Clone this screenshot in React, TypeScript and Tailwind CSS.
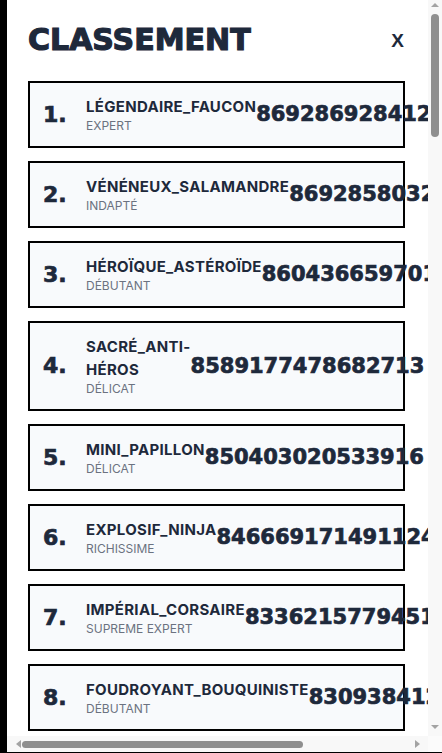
import React from 'react'

type Player = {
  name: string
  title: string
  score: string
}

const topPlayers: Player[] = [
  { name: 'LÉGENDAIRE_FAUCON', title: 'EXPERT', score: '869286928412357' },
  { name: 'VÉNÉNEUX_SALAMANDRE', title: 'INDAPTÉ', score: '869285803214675' },
  { name: 'HÉROÏQUE_ASTÉROÏDE', title: 'DÉBUTANT', score: '860436659701248' },
  { name: 'SACRÉ_ANTI-HÉROS', title: 'DÉLICAT', score: '8589177478682713' },
  { name: 'MINI_PAPILLON', title: 'DÉLICAT', score: '850403020533916' },
  { name: 'EXPLOSIF_NINJA', title: 'RICHISSIME', score: '846669171491124' },
  { name: 'IMPÉRIAL_CORSAIRE', title: 'SUPREME EXPERT', score: '833621577945102' },
  { name: 'FOUDROYANT_BOUQUINISTE', title: 'DÉBUTANT', score: '830938412650' },
]

const adjectives = ['RAPIDE', 'FÉROCE', 'DISCRET', 'GÉANT', 'MYSTIQUE', 'COSMIQUE', 'SAUVAGE', 'TURBO']
const nouns = ['LOUTRE', 'DRAGON', 'PINGOUIN', 'CACTUS', 'COMÈTE', 'HIBOU', 'TITAN', 'RENARD', 'PIRATE']
const titles = ['EXPERT', 'DÉBUTANT', 'DÉLICAT', 'INDAPTÉ', 'CONFIRMÉ', 'SUPREME EXPERT']

const morePlayers: Player[] = Array.from({ length: 4 }, (_, i) => ({
  name: `${adjectives[i % adjectives.length]}_${nouns[(i * 5) % nouns.length]}`,
  title: titles[(i * 7) % titles.length],
  score: String(829000000000 - i * 17364529871).slice(0, 12),
}))

const players = [...topPlayers, ...morePlayers]

const heavy = { fontFamily: '"DejaVu Sans", "Liberation Sans", sans-serif' }
const body = { fontFamily: 'Inter, "Open Sans", sans-serif' }

function PlayerCard({ rank, player }: { rank: number; player: Player }) {
  return (
    <div className="flex w-[377px] items-center border-2 border-black bg-[#f8fafc] pl-[13px] py-[12px]">
      <div
        className="w-[43px] shrink-0 text-[22px] font-bold leading-none text-[#1e293b] [-webkit-text-stroke:0.7px_#1e293b]"
        style={heavy}
      >
        {rank}.
      </div>
      <div className="flex flex-col" style={body}>
        <span className="text-[15px] font-bold leading-[23px] tracking-[0.02em] text-[#1e293b]">
          {player.name}
        </span>
        <span className="text-[12px] leading-[16px] text-[#6b7280]">{player.title}</span>
      </div>
      <div
        className="shrink-0 whitespace-nowrap text-[21px] font-bold leading-none text-[#1e293b] [-webkit-text-stroke:0.7px_#1e293b]"
        style={heavy}
      >
        {player.score}
      </div>
    </div>
  )
}

function Arrow({ dir }: { dir: 'up' | 'down' | 'left' | 'right' }) {
  const points = {
    up: '0,4 4,0 8,4',
    down: '0,0 8,0 4,4',
    left: '5,0 5,8 0,4',
    right: '0,0 0,8 5,4',
  }[dir]
  const vertical = dir === 'up' || dir === 'down'
  return (
    <svg width={vertical ? 8 : 5} height={vertical ? 4 : 8} viewBox={vertical ? '0 0 8 4' : '0 0 5 8'}>
      <polygon points={points} fill="#a3a3a3" />
    </svg>
  )
}

export default function App() {
  return (
    <div className="flex h-[753px] w-[442px] flex-col border-l-[7px] border-b-[1px] border-black bg-white">
      <div className="flex min-h-0 flex-1">
        {/* Scrolling content */}
        <div className="min-w-0 flex-1 overflow-hidden pl-[21px] pt-[22px]">
          {/* Header */}
          <div className="mb-[23px] flex w-[377px] items-center justify-between">
            <h1
              className="text-[30px] font-bold leading-[36px] text-[#1e293b] [-webkit-text-stroke:1.2px_#1e293b]"
              style={heavy}
            >
              CLASSEMENT
            </h1>
            <button
              className="mr-[1px] text-[19px] font-bold leading-none text-[#1e293b]"
              style={{ fontFamily: '"Liberation Sans", Arial, sans-serif' }}
            >
              X
            </button>
          </div>

          {/* Ranking list */}
          <div className="flex flex-col gap-[13px]">
            {players.map((player, i) => (
              <PlayerCard key={i} rank={i + 1} player={player} />
            ))}
          </div>
        </div>

        {/* Vertical scrollbar */}
        <div className="flex w-[14px] shrink-0 flex-col items-center bg-[#f8f8f8]">
          <div className="flex h-[12px] items-center pb-[2px]">
            <Arrow dir="up" />
          </div>
          <div className="flex-1">
            <div className="mt-[2px] h-[123px] w-[8px] rounded-full bg-[#8f8f8f]" />
          </div>
          <div className="flex h-[14px] items-start pt-[3px]">
            <Arrow dir="down" />
          </div>
        </div>
      </div>

      {/* Horizontal scrollbar */}
      <div className="flex h-[16px] shrink-0">
        <div className="flex flex-1 items-center bg-[#f8f8f8]">
          <div className="flex w-[15px] justify-end pr-[1px]">
            <Arrow dir="left" />
          </div>
          <div className="flex-1">
            <div className="h-[7px] w-[281px] rounded-full bg-[#8f8f8f]" />
          </div>
          <div className="flex w-[16px] pl-[3px]">
            <Arrow dir="right" />
          </div>
        </div>
        <div className="w-[14px] bg-[#fbfbfb]" />
      </div>
    </div>
  )
}
